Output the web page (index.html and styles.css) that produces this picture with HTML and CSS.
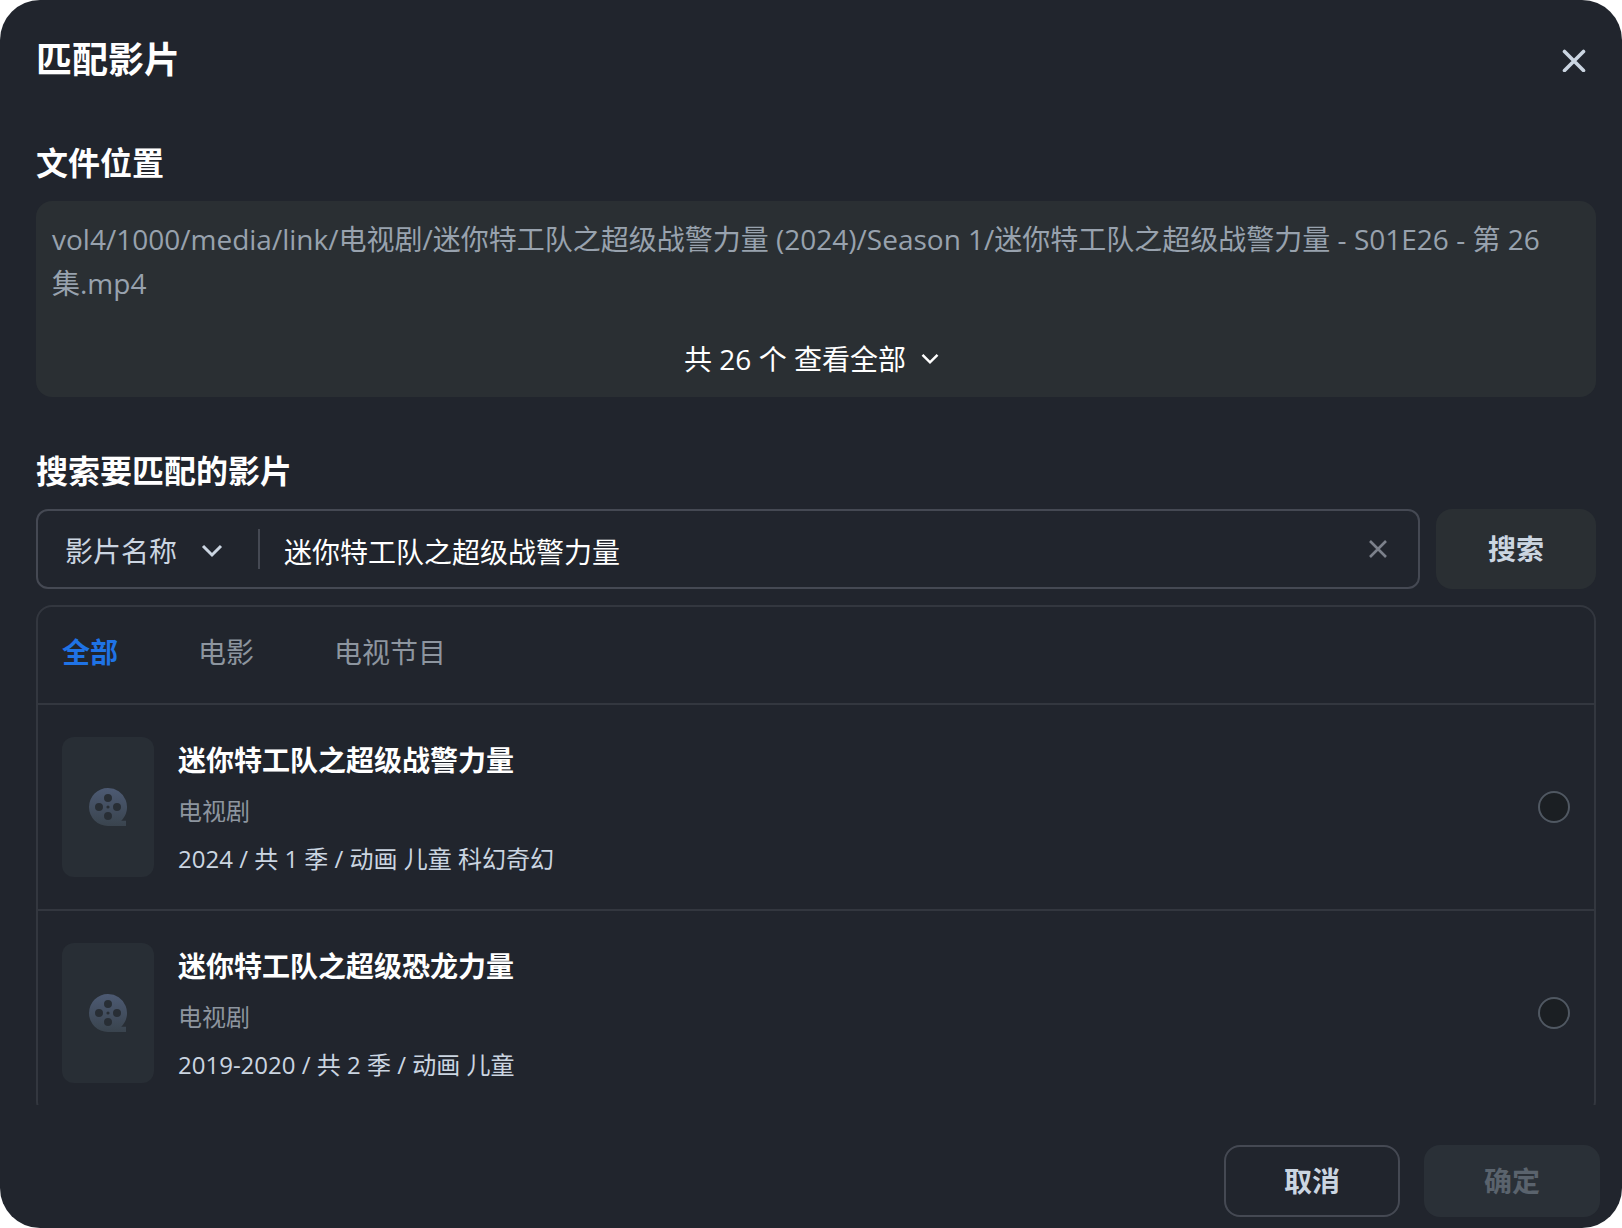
FILE: index.html
```
<!DOCTYPE html>
<html lang="zh-CN">
<head>
  <meta charset="UTF-8" />
  <meta name="viewport" content="width=device-width, initial-scale=1.0"/>
  <title>匹配影片</title>
  <link rel="stylesheet" href="styles.css">
</head>
<body>

  <svg class="sprite" aria-hidden="true">
    <defs>
      <linearGradient id="reel-fill" x1="0" y1="0" x2="0" y2="1">
        <stop offset="0" stop-color="#4d5a73"/>
        <stop offset="1" stop-color="#3a444e"/>
      </linearGradient>
    </defs>
    <symbol id="icon-reel" viewBox="0 0 40 40">
      <path fill="url(#reel-fill)" fill-rule="evenodd" d="M20 1a19 19 0 0 1 13.200 32.700h4.800v5.300H20a19 19 0 0 1 0-38zM20 7a4 4 0 1 0 0 8a4 4 0 1 0 0-8zM11 16a4 4 0 1 0 0 8a4 4 0 1 0 0-8zM29 16a4 4 0 1 0 0 8a4 4 0 1 0 0-8zM20 25a4 4 0 1 0 0 8a4 4 0 1 0 0-8zM20 18.400a1.600 1.600 0 1 0 0 3.200a1.600 1.600 0 1 0 0-3.200z"/>
    </symbol>
    <symbol id="icon-chevron" viewBox="0 0 24 24">
      <path d="M3 7l9 9l9-9" fill="none" stroke="currentColor" stroke-width="3"/>
    </symbol>
  </svg>

  <main class="dialog">
    <header class="dialog-header">
      <h1 class="dialog-title">匹配影片</h1>
      <button class="icon-btn btn-close" type="button" aria-label="关闭">
        <svg width="24" height="24" viewBox="0 0 24 24"><path d="M2.500 3.500l19 19M21.500 3.500l-19 19" stroke="currentColor" stroke-width="3.600" stroke-linecap="round"/></svg>
      </button>
    </header>

    <div class="dialog-body">
      <section class="section">
        <h2 class="section-title">文件位置</h2>
        <div class="file-box">
          <p class="file-path">vol4/1000/media/link/电视剧/迷你特工队之超级战警力量 (2024)/Season 1/迷你特工队之超级战警力量 - S01E26 - 第 26 集.mp4</p>
          <button class="file-toggle" type="button">
            <span>共 26 个 查看全部</span>
            <svg width="20" height="20"><use href="#icon-chevron"/></svg>
          </button>
        </div>
      </section>

      <section class="section">
        <h2 class="section-title">搜索要匹配的影片</h2>
        <form class="search">
          <div class="search-box">
            <div class="search-type">
              <select class="search-select" aria-label="搜索类型">
                <option>影片名称</option>
              </select>
              <svg class="search-arrow" width="24" height="24"><use href="#icon-chevron"/></svg>
            </div>
            <input class="search-input" type="text" value="迷你特工队之超级战警力量" aria-label="影片名称">
            <button class="icon-btn btn-clear" type="button" aria-label="清空">
              <svg width="20" height="20" viewBox="0 0 20 20"><path d="M2 2l16 16M18 2l-16 16" stroke="currentColor" stroke-width="2.600"/></svg>
            </button>
          </div>
          <button class="btn btn-search" type="button">搜索</button>
        </form>

        <div class="results">
          <nav class="tabs">
            <button class="tab tab-active" type="button">全部</button>
            <button class="tab" type="button">电影</button>
            <button class="tab" type="button">电视节目</button>
          </nav>

          <label class="result">
            <span class="poster"><svg width="40" height="40"><use href="#icon-reel"/></svg></span>
            <span class="info">
              <span class="info-title">迷你特工队之超级战警力量</span>
              <span class="info-type">电视剧</span>
              <span class="info-meta">2024 / 共 1 季 / 动画 儿童 科幻奇幻</span>
            </span>
            <input class="radio" type="radio" name="movie">
          </label>

          <label class="result">
            <span class="poster"><svg width="40" height="40"><use href="#icon-reel"/></svg></span>
            <span class="info">
              <span class="info-title">迷你特工队之超级恐龙力量</span>
              <span class="info-type">电视剧</span>
              <span class="info-meta">2019-2020 / 共 2 季 / 动画 儿童</span>
            </span>
            <input class="radio" type="radio" name="movie">
          </label>
        </div>
      </section>
    </div>

    <footer class="dialog-footer">
      <button class="btn btn-cancel" type="button">取消</button>
      <button class="btn btn-ok" type="button" disabled>确定</button>
    </footer>
  </main>

</body>
</html>
```
FILE: styles.css
```
* {
  box-sizing: border-box;
}

body {
  margin: 0;
  background: #ffffff;
  color: #ffffff;
  font-family: "Open Sans", "Noto Sans CJK SC", sans-serif;
  font-size: 28px;
  line-height: 44px;
}

h1,
h2,
p {
  margin: 0;
}

button,
input,
select {
  font: inherit;
  color: inherit;
  margin: 0;
  padding: 0;
  border: none;
  background: none;
}

button {
  cursor: pointer;
}

svg {
  display: block;
}

.sprite {
  position: absolute;
  width: 0;
  height: 0;
}

.dialog {
  display: flex;
  flex-direction: column;
  height: 100vh;
  background: #21252d;
  border-radius: 40px;
  overflow: hidden;
}

.dialog-header {
  display: flex;
  justify-content: space-between;
  align-items: center;
  height: 120px;
  padding: 0 36px;
}

.dialog-title {
  font-size: 36px;
  line-height: 48px;
}

.icon-btn {
  display: flex;
  justify-content: center;
  align-items: center;
}

.btn-close {
  color: #cbd5e1;
}

.dialog-body {
  flex: 1;
  min-height: 0;
  padding: 19px 26px 0 36px;
  overflow-y: auto;
  scrollbar-width: none;
}

.section + .section {
  margin-top: 50px;
}

.section-title {
  margin-bottom: 14px;
  font-size: 32px;
  line-height: 48px;
}

/* file location */
.file-box {
  display: flex;
  flex-direction: column;
  gap: 32px;
  padding: 16px;
  border-radius: 16px;
  background: #2a2f33;
}

.file-path {
  color: #98a2ae;
}

.file-toggle {
  display: flex;
  align-items: center;
  align-self: center;
  gap: 14px;
  padding-right: 8px;
}

/* search */
.search {
  display: flex;
  gap: 16px;
  height: 80px;
}

.search-box {
  flex: 1;
  display: flex;
  align-items: center;
  min-width: 0;
  border: 2px solid #454953;
  border-radius: 12px;
}

.search-type {
  display: grid;
  align-items: center;
  width: 222px;
  border-right: 2px solid #454953;
  height: 40px;
  color: #cbd5e1;
}

.search-select {
  grid-area: 1 / 1;
  width: 100%;
  height: 44px;
  padding-left: 27px;
  appearance: none;
}

.search-arrow {
  grid-area: 1 / 1;
  justify-self: end;
  margin-right: 34px;
  pointer-events: none;
}

.search-input {
  flex: 1;
  min-width: 0;
  height: 48px;
  padding: 3px 24px 0;
  outline: none;
}

.btn-clear {
  margin-right: 30px;
  color: #7c818b;
}

.btn {
  border-radius: 16px;
  font-weight: bold;
}

.btn-search {
  width: 160px;
  background: #2a2f33;
  color: #cbd5e1;
}

/* results */
.results {
  margin-top: 16px;
  border: 2px solid #33373f;
  border-radius: 16px;
}

.tabs {
  display: flex;
  gap: 80px;
  padding: 23px 24px 29px;
  color: #8d959f;
}

.tab-active {
  color: #1f73e6;
  font-weight: bold;
}

.result {
  display: flex;
  align-items: center;
  gap: 24px;
  padding: 32px 24px;
  border-top: 2px solid #33373f;
}

.poster {
  display: flex;
  justify-content: center;
  align-items: center;
  width: 92px;
  height: 140px;
  border-radius: 12px;
  background: #282e35;
}

.info {
  flex: 1;
  display: flex;
  flex-direction: column;
  gap: 12px;
  padding-top: 2px;
  font-size: 24px;
  line-height: 36px;
}

.info-title {
  font-size: 28px;
  font-weight: bold;
  line-height: 42px;
}

.info-type {
  color: #8d959f;
}

.info-meta {
  color: #cbd5e1;
}

.radio {
  appearance: none;
  width: 32px;
  height: 32px;
  border: 2px solid #505862;
  border-radius: 50%;
  background: #1b1f23;
}

.radio:checked {
  border: 10px solid #1f73e6;
}

/* footer */
.dialog-footer {
  display: flex;
  justify-content: flex-end;
  gap: 24px;
  padding: 40px 22px 11px;
}

.dialog-footer .btn {
  width: 176px;
  height: 72px;
}

.btn-cancel {
  border: 2px solid #454953;
  color: #cbd5e1;
}

.btn-ok {
  background: #2a3037;
  color: #5a636d;
  cursor: default;
}
```
